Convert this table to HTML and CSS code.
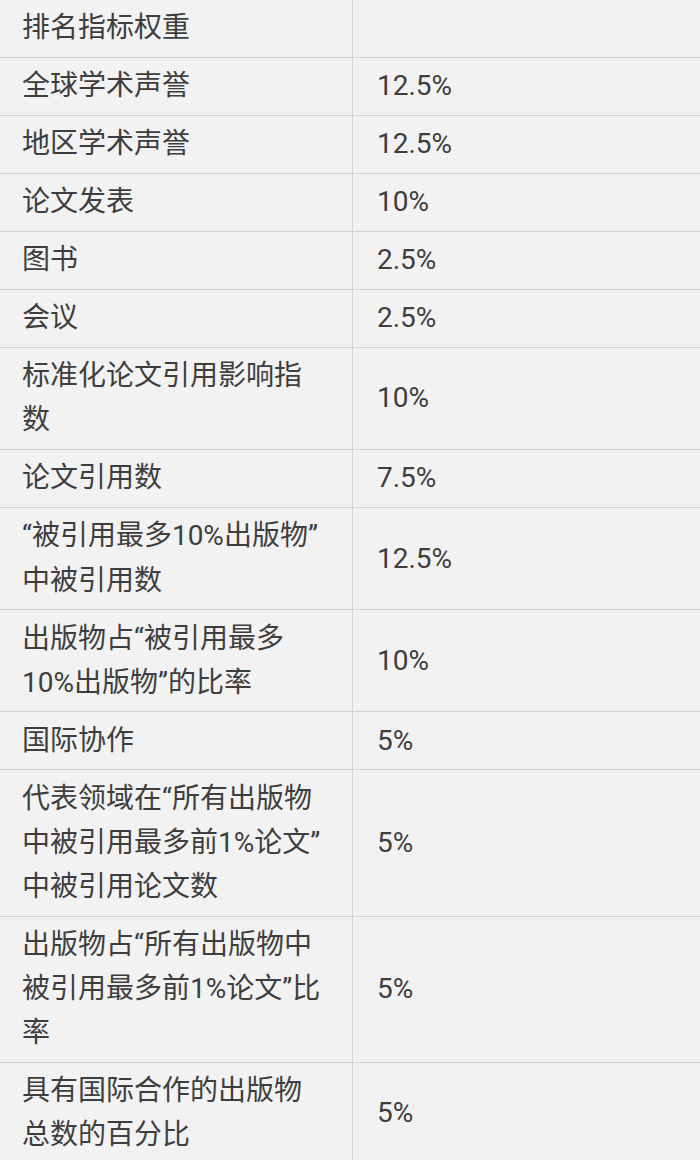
FILE: index.html
```html
<!DOCTYPE html>
<html lang="zh-CN">
<head>
<meta charset="utf-8">
<title>排名指标权重</title>
<link rel="stylesheet" href="styles.css">
</head>
<body>
<div class="table">
  <div class="cell name">排名指标权重</div><div class="cell value"></div>
  <div class="cell name">全球学术声誉</div><div class="cell value">12.5%</div>
  <div class="cell name">地区学术声誉</div><div class="cell value">12.5%</div>
  <div class="cell name">论文发表</div><div class="cell value">10%</div>
  <div class="cell name">图书</div><div class="cell value">2.5%</div>
  <div class="cell name">会议</div><div class="cell value">2.5%</div>
  <div class="cell name">标准化论文引用影响指数</div><div class="cell value">10%</div>
  <div class="cell name">论文引用数</div><div class="cell value">7.5%</div>
  <div class="cell name">“被引用最多10%出版物”中被引用数</div><div class="cell value">12.5%</div>
  <div class="cell name">出版物占“被引用最多10%出版物”的比率</div><div class="cell value">10%</div>
  <div class="cell name">国际协作</div><div class="cell value">5%</div>
  <div class="cell name">代表领域在“所有出版物中被引用最多前1%论文”中被引用论文数</div><div class="cell value">5%</div>
  <div class="cell name">出版物占“所有出版物中被引用最多前1%论文”比率</div><div class="cell value">5%</div>
  <div class="cell name">具有国际合作的出版物总数的百分比</div><div class="cell value">5%</div>
</div>
</body>
</html>
```

FILE: styles.css
```css
html, body {
  margin: 0;
  padding: 0;
  background: #f2f2f2;
}

body {
  width: 700px;
  height: 1160px;
  overflow: hidden;
  font-family: Roboto, "Noto Sans CJK SC", sans-serif;
  font-size: 28px;
  color: #3e3e3e;
}

.table {
  display: grid;
  grid-template-columns: 353px 1fr;
}

.cell {
  border-bottom: 1px solid #d2d2d2;
  line-height: 44.15px;
  padding-top: 6.42px;
  padding-bottom: 6.43px;
}

.name {
  border-right: 1px solid #d2d2d2;
  padding-left: 22px;
  padding-right: 28px;
}

.value {
  display: flex;
  align-items: center;
  padding-left: 24px;
}
```
